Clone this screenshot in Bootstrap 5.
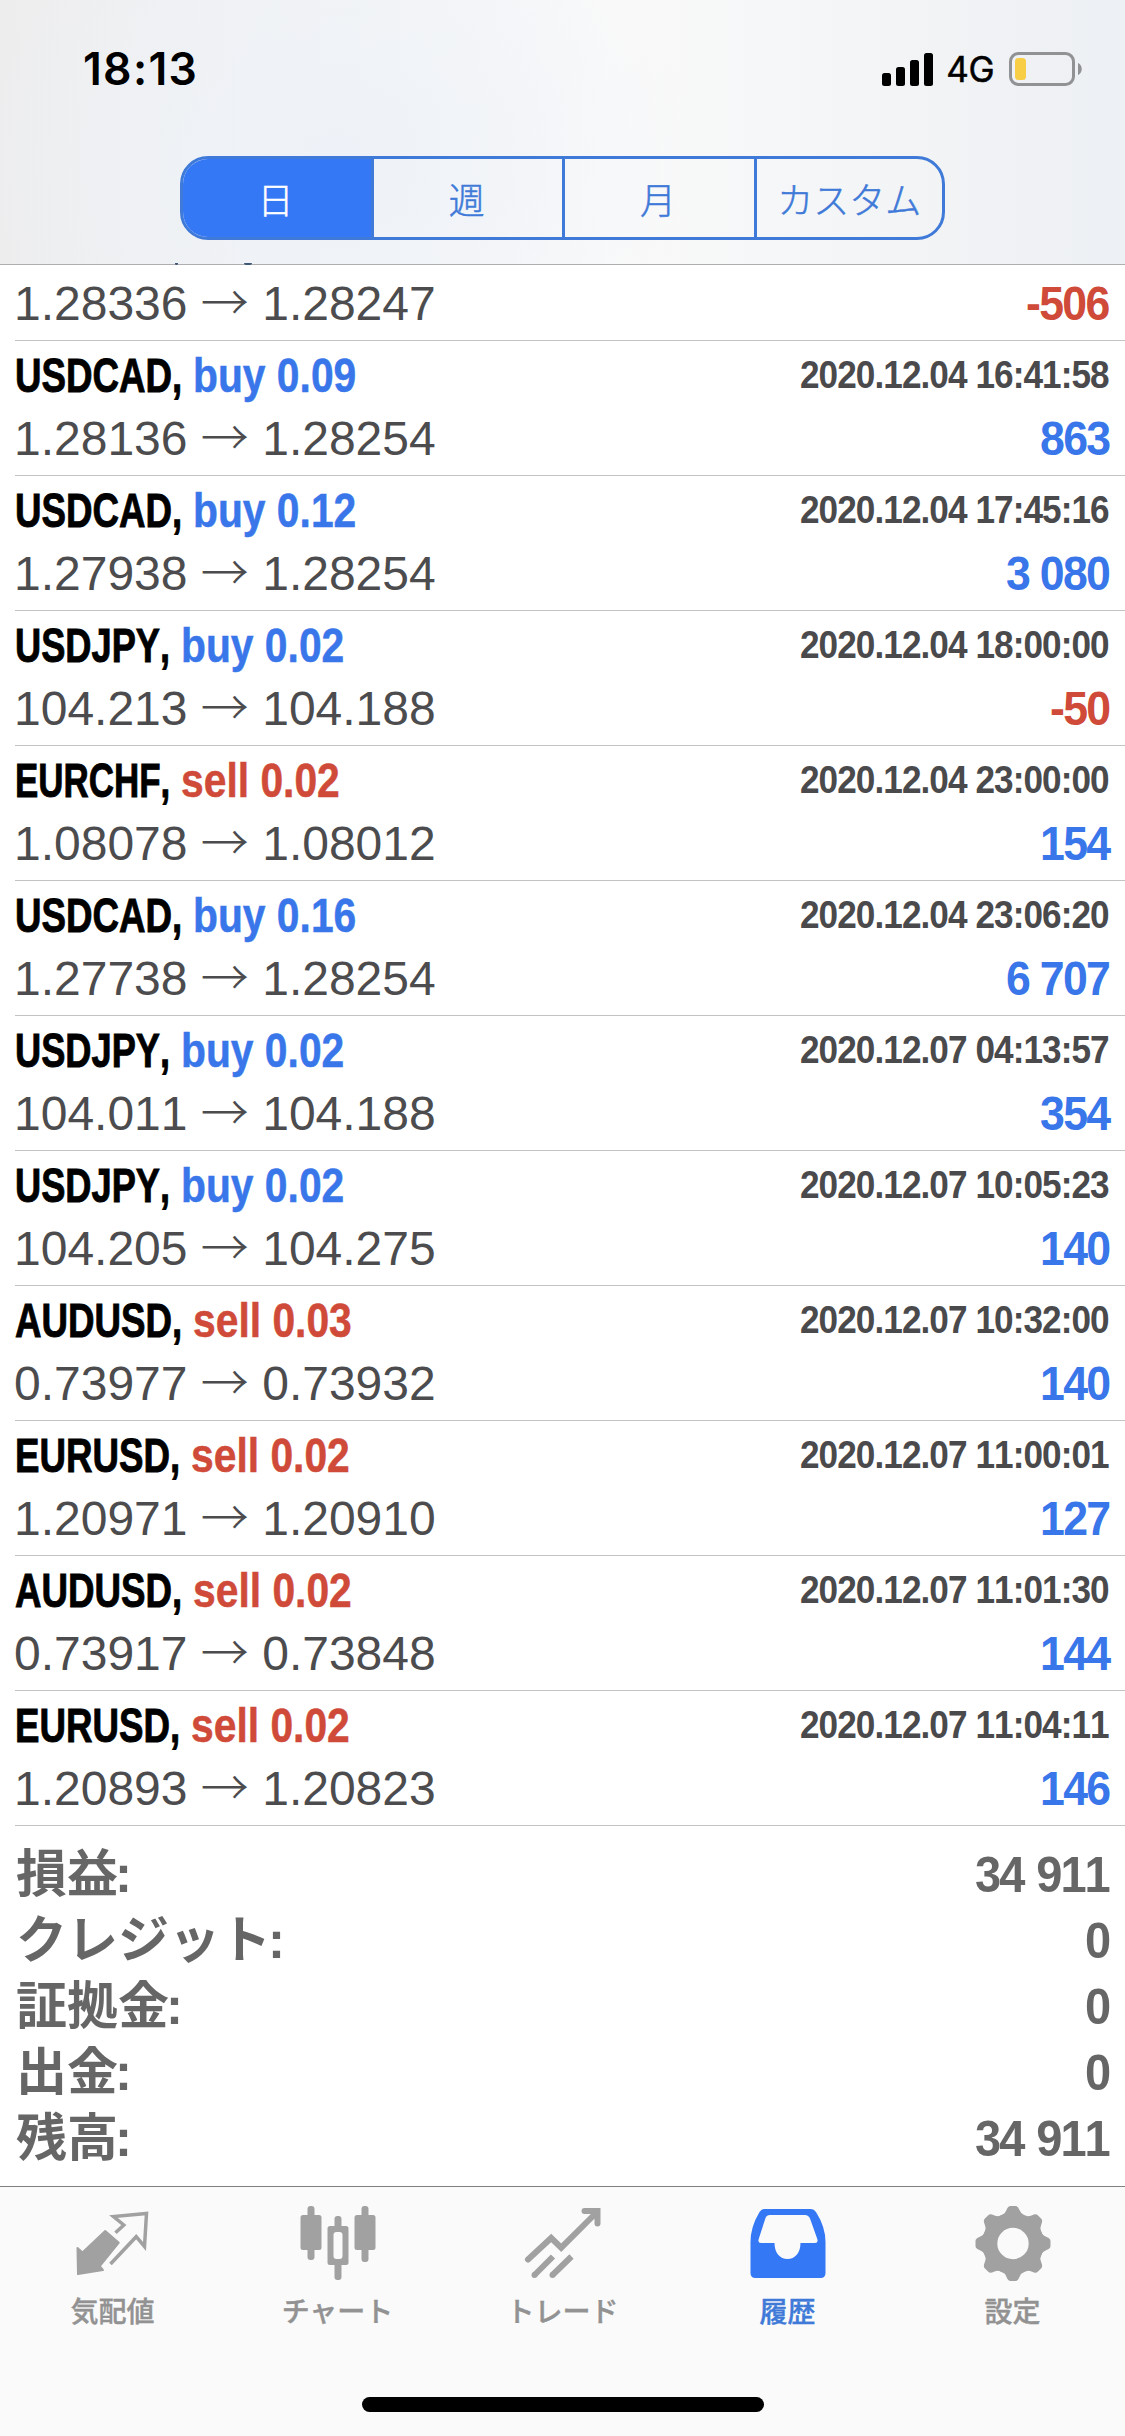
<!DOCTYPE html>
<html lang="ja">
<head>
<meta charset="utf-8">
<meta name="viewport" content="width=device-width, initial-scale=1">
<title>履歴</title>
<link rel="stylesheet" href="https://cdn.jsdelivr.net/npm/bootstrap@5.3.0/dist/css/bootstrap.min.css">
<style>
  body{width:1125px;height:2436px;overflow:hidden;background:#fff;font-family:"Liberation Sans","Noto Sans CJK JP",sans-serif;font-kerning:none}
  .app{height:2436px}
  .topbar{height:265px;border-bottom:1px solid #aeaeb0;
    background:radial-gradient(ellipse 360px 300px at 30% 60%,#eef2f8 0,#eef2f800 100%),linear-gradient(90deg,#ededee 0,#f0f1f2 18%,#f5f6f7 38%,#fafafa 54%,#f6f7f8 68%,#f1f3f5 84%,#edf0f4 100%)}
  .statusbar{height:156px;padding:31px 42px 0 83px;font-family:Inter,sans-serif;color:#000}
  .clock{font-size:44.5px;font-weight:600;line-height:77px;letter-spacing:1.3px}
  .net{font-size:35px;line-height:76px;font-weight:400;letter-spacing:-.5px;margin:0 15px 0 13px;-webkit-text-stroke:.5px #000}
  .seg{width:765px;height:84px;margin:0 auto;border:3px solid #3f7ad8;border-radius:28px;overflow:hidden;left:0}
  .seg .btn{flex:1 1 0;border:0;border-left:3px solid #3f7ad8;border-radius:0;margin:0!important;padding:0 3px 0 0;color:#3f7ad8;font:300 36px/75px "Noto Sans CJK JP",sans-serif;-webkit-text-stroke:.5px}
  .seg .btn:first-child{flex:0 0 188px;border-left:0;background:#3478f6;color:#fff}
  .seg .btn:last-child{padding:0}
  .peek{position:absolute;height:2px;top:263px;background:#3f5878;border-radius:0 0 4px 4px}
  .deal{height:135px;padding:4px 16px 0 0;border-bottom:1px solid #c3c3c5;margin-left:15px;line-height:62px;white-space:nowrap}
  .deal.cut{height:76px;padding-top:7px}
  .deal>div{height:62px}
  .deal .quote{padding-top:1px}
  .sx{display:inline-block;transform:scaleX(var(--s));transform-origin:0 50%}
  .pair{--s:.765;font-size:48px;font-weight:700;color:#000;-webkit-text-stroke:.9px}
  .pair.EURCHF{--s:.728}
  .pair.USDJPY{--s:.755}
  .act{--s:.85;font-size:48px;font-weight:700;margin-left:11px;-webkit-text-stroke:.5px}
  .stamp{--s:.925;font-size:38px;font-weight:700;letter-spacing:-.0265em;color:#4a4a4c;margin-top:-1px}
  .price{font-size:48px;color:#4c4c4e;margin-left:-1px}
  .arw{font-family:"Noto Sans CJK JP",sans-serif;font-weight:300;line-height:1}
  .gain{--s:.93;font-size:48px;font-weight:700;letter-spacing:-.038em}
  .up{color:#3876ea}.down{color:#cf4a38}
  .totals{padding:16px 16px 0 16px;height:360px;color:#666;font-weight:700}
  .totals>div{height:66px;line-height:66px}
  .tname{font-family:"Liberation Sans","Noto Sans CJK JP",sans-serif;font-size:51px}
  .tname b{margin-left:-3px}
  .tval{--s:.94;font-size:50px;letter-spacing:-.042em;word-spacing:2px}
  .tabs{height:250px;border-top:1px solid #808082;background:#fafafa;color:#929292}
  .tabs a{flex:1 1 0;padding-top:15px;color:inherit;text-decoration:none;font:500 28px/48px "Noto Sans CJK JP",sans-serif;-webkit-text-stroke:.4px}
  .tabs a.on{color:#3f7ad8}
  .tabs svg{width:84px;height:84px;color:#a1a1a1}
  .tabs a.on svg{color:#3478f6}
  .homebar{width:402px;height:15px;border-radius:8px;background:#000;margin-bottom:24px}
</style>
<script src="https://cdn.jsdelivr.net/npm/bootstrap@5.3.0/dist/js/bootstrap.bundle.min.js"></script>
</head>
<body>
<div class="app d-flex flex-column">
  <header class="topbar flex-shrink-0 position-relative">
    <div class="statusbar d-flex justify-content-between align-items-start">
      <span class="clock">18:13</span>
      <div class="d-flex align-items-center">
        <svg width="51" height="34" viewBox="0 0 51 34"><rect y="21" width="9" height="13" rx="2.5"/><rect x="14" y="15" width="9" height="19" rx="2.5"/><rect x="28" y="8" width="9" height="26" rx="2.5"/><rect x="42" y="1" width="9" height="33" rx="2.5"/></svg>
        <span class="net">4G</span>
        <svg width="74" height="36" viewBox="0 0 74 36"><rect x="1.5" y="2.5" width="63" height="31" rx="8" fill="none" stroke="#909294" stroke-width="3"/><rect x="6" y="7" width="11" height="22" rx="3.5" fill="#f7ce46"/><path d="M69 12c5 2 5 10 0 12z" fill="#909294"/></svg>
      </div>
    </div>
    <div class="seg btn-group d-flex"><button class="btn">日</button><button class="btn">週</button><button class="btn">月</button><button class="btn">カスタム</button></div>
    <i class="peek" style="left:175px;width:3px"></i><i class="peek" style="left:244px;width:8px"></i>
  </header>
  <main class="flex-grow-1 bg-white">
    <div id="deals"></div>
    <div class="totals">
      <div class="d-flex justify-content-between"><span class="tname">損益<b>:</b></span><span class="sx tval">34 911</span></div>
      <div class="d-flex justify-content-between"><span class="tname">クレジット<b>:</b></span><span class="sx tval">0</span></div>
      <div class="d-flex justify-content-between"><span class="tname">証拠金<b>:</b></span><span class="sx tval">0</span></div>
      <div class="d-flex justify-content-between"><span class="tname">出金<b>:</b></span><span class="sx tval">0</span></div>
      <div class="d-flex justify-content-between"><span class="tname">残高<b>:</b></span><span class="sx tval">34 911</span></div>
    </div>
  </main>
  <footer class="tabs flex-shrink-0 d-flex flex-column justify-content-between align-items-center">
    <nav class="d-flex w-100 text-center">
      <a href="#" class="d-flex flex-column align-items-center">
        <svg viewBox="0 0 84 84"><path d="M6.500 46 11.500 50.500 34.200 29 47.800 40.700 28.800 64 32 68 7 72z" fill="currentColor" stroke="currentColor" stroke-width="2" stroke-linejoin="round"/><path d="M44.500 30.700 52.800 23 42.500 14.500 75.500 11.500 73.500 44.500 65.200 34.700 39.500 62" fill="none" stroke="currentColor" stroke-width="3.500"/></svg>気配値</a>
      <a href="#" class="d-flex flex-column align-items-center">
        <svg viewBox="0 0 84 84" fill="currentColor"><rect x="4.500" y="13" width="21" height="35" rx="2.500"/><rect x="11.500" y="4" width="7" height="54" rx="3"/><rect x="58.500" y="13" width="21" height="35" rx="2.500"/><rect x="65.500" y="4" width="7" height="56" rx="3"/><rect x="38.500" y="14" width="7" height="64" rx="3"/><rect x="31.500" y="24" width="21" height="39" rx="2.500"/><rect x="37.500" y="30" width="9" height="27" rx="3" fill="#fafafa"/></svg>チャート</a>
      <a href="#" class="d-flex flex-column align-items-center">
        <svg viewBox="0 0 84 84" fill="none" stroke="currentColor" stroke-width="6"><path d="M7 57.500 30.200 36 40.200 45.700 76 10M63.500 9H76.500V21.500" stroke-linecap="round"/><path d="M13.500 73 32 54.500M31.500 73 50.500 54.500"/><circle cx="13.500" cy="73" r="3" fill="currentColor" stroke="none"/><circle cx="31.500" cy="73" r="3" fill="currentColor" stroke="none"/></svg>トレード</a>
      <a href="#" class="on d-flex flex-column align-items-center">
        <svg viewBox="0 0 84 84"><path fill="currentColor" fill-rule="evenodd" d="M18 7H65Q68 7 70 10 79.500 25 79.500 40V71Q79.500 76 74.500 76H9.500Q4.500 76 4.500 71V40Q4.500 25 13.500 10 15.500 7 18 7zM24 13Q20.500 13 19.500 16L12.700 37Q11.500 41 15 41H28.500C28.500 51 34 57 41.500 57S54.500 51 54.500 41H69Q72.500 41 71.300 37L64 16.500Q62.500 13 59 13z"/></svg>履歴</a>
      <a href="#" class="d-flex flex-column align-items-center">
        <svg viewBox="0 0 84 84"><defs><path id="tooth" d="M30.500 13.500Q34 12 35.500 8T39.500 4H44.500Q47 4 48.500 8T53.500 13.500z"/></defs><g fill="currentColor"><circle cx="42" cy="41.500" r="23.200" fill="none" stroke="currentColor" stroke-width="15"/><use href="#tooth"/><use href="#tooth" transform="rotate(45 42 41.500)"/><use href="#tooth" transform="rotate(90 42 41.500)"/><use href="#tooth" transform="rotate(135 42 41.500)"/><use href="#tooth" transform="rotate(180 42 41.500)"/><use href="#tooth" transform="rotate(225 42 41.500)"/><use href="#tooth" transform="rotate(270 42 41.500)"/><use href="#tooth" transform="rotate(315 42 41.500)"/></g></svg>設定</a>
    </nav>
    <div class="homebar"></div>
  </footer>
</div>
<script>
  const deals = [
    [null, null, null, '1.28336', '1.28247', '-506'],
    ['USDCAD', 'buy 0.09', '2020.12.04 16:41:58', '1.28136', '1.28254', '863'],
    ['USDCAD', 'buy 0.12', '2020.12.04 17:45:16', '1.27938', '1.28254', '3 080'],
    ['USDJPY', 'buy 0.02', '2020.12.04 18:00:00', '104.213', '104.188', '-50'],
    ['EURCHF', 'sell 0.02', '2020.12.04 23:00:00', '1.08078', '1.08012', '154'],
    ['USDCAD', 'buy 0.16', '2020.12.04 23:06:20', '1.27738', '1.28254', '6 707'],
    ['USDJPY', 'buy 0.02', '2020.12.07 04:13:57', '104.011', '104.188', '354'],
    ['USDJPY', 'buy 0.02', '2020.12.07 10:05:23', '104.205', '104.275', '140'],
    ['AUDUSD', 'sell 0.03', '2020.12.07 10:32:00', '0.73977', '0.73932', '140'],
    ['EURUSD', 'sell 0.02', '2020.12.07 11:00:01', '1.20971', '1.20910', '127'],
    ['AUDUSD', 'sell 0.02', '2020.12.07 11:01:30', '0.73917', '0.73848', '144'],
    ['EURUSD', 'sell 0.02', '2020.12.07 11:04:11', '1.20893', '1.20823', '146']
  ];
  document.getElementById('deals').innerHTML = deals.map(([pair, act, time, from, to, gain]) => `
    <div class="deal ${pair ? '' : 'cut'}">
      ${pair ? `<div class="d-flex justify-content-between"><div><span class="sx pair ${pair}">${pair},</span><span class="sx act ${act[0] === 'b' ? 'up' : 'down'}">${act}</span></div><span class="sx stamp">${time}</span></div>` : ''}
      <div class="quote d-flex justify-content-between"><span class="price">${from} <span class="arw">→</span> ${to}</span><span class="sx gain ${gain[0] === '-' ? 'down' : 'up'}">${gain}</span></div>
    </div>`).join('');
  // Condensed text keeps its full layout width, so pull the following edge in by the difference.
  document.querySelectorAll('.sx').forEach(el => {
    const s = parseFloat(getComputedStyle(el).getPropertyValue('--s'));
    el.style.marginRight = -(1 - s) * el.offsetWidth + 'px';
  });
</script>
</body>
</html>
